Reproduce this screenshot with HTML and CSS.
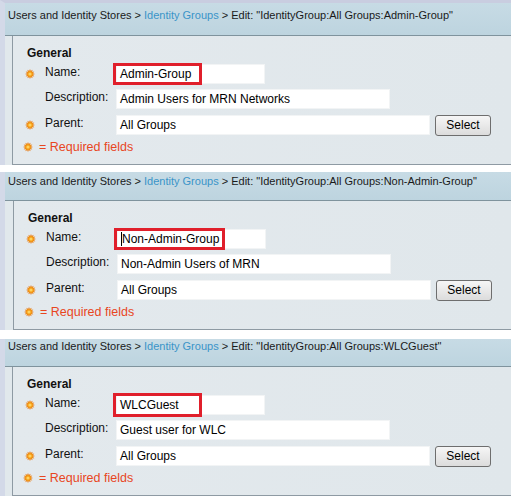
FILE: index.html
```html
<!DOCTYPE html>
<html>
<head>
<meta charset="utf-8">
<link rel="stylesheet" href="styles.css">
</head>
<body>
<svg class="defs" width="0" height="0">
  <defs>
    <g id="sun">
      <polygon points="5,0 5.8,2.1 7.5,0.7 7.1,2.9 9.3,2.5 7.9,4.2 10,5 7.9,5.8 9.3,7.5 7.1,7.1 7.5,9.3 5.8,7.9 5,10 4.2,7.9 2.5,9.3 2.9,7.1 0.7,7.5 2.1,5.8 0,5 2.1,4.2 0.7,2.5 2.9,2.9 2.5,0.7 4.2,2.1" fill="#e8780c"/>
      <circle cx="5" cy="5" r="3" fill="#f39a1a"/>
      <circle cx="5" cy="5" r="1.6" fill="#ffd35c"/>
    </g>
  </defs>
</svg>

<div class="panel p1">
  <div class="crumb">Users and Identity Stores &gt; <span class="link">Identity Groups</span> &gt; Edit: "IdentityGroup:All Groups:Admin-Group"</div>
  <div class="group">
    <div class="legend">General</div>
    <div class="row">
      <span class="req"><svg class="sun" viewBox="0 0 10 10"><use href="#sun"/></svg></span>
      <span class="label">Name:</span>
      <span class="field name">Admin-Group<span class="mark"></span></span>
    </div>
    <div class="row">
      <span class="req"></span>
      <span class="label">Description:</span>
      <span class="field desc">Admin Users for MRN Networks</span>
    </div>
    <div class="row parent">
      <span class="req"><svg class="sun" viewBox="0 0 10 10"><use href="#sun"/></svg></span>
      <span class="label">Parent:</span>
      <span class="field par">All Groups</span>
      <span class="btn">Select</span>
    </div>
    <div class="note"><svg class="sun" viewBox="0 0 10 10"><use href="#sun"/></svg><span>= Required fields</span></div>
  </div>
</div>

<div class="panel p2">
  <div class="crumb">Users and Identity Stores &gt; <span class="link">Identity Groups</span> &gt; Edit: "IdentityGroup:All Groups:Non-Admin-Group"</div>
  <div class="group">
    <div class="legend">General</div>
    <div class="row">
      <span class="req"><svg class="sun" viewBox="0 0 10 10"><use href="#sun"/></svg></span>
      <span class="label">Name:</span>
      <span class="field name"><span class="caret"></span>Non-Admin-Group<span class="mark wide"></span></span>
    </div>
    <div class="row">
      <span class="req"></span>
      <span class="label">Description:</span>
      <span class="field desc">Non-Admin Users of MRN</span>
    </div>
    <div class="row parent">
      <span class="req"><svg class="sun" viewBox="0 0 10 10"><use href="#sun"/></svg></span>
      <span class="label">Parent:</span>
      <span class="field par">All Groups</span>
      <span class="btn">Select</span>
    </div>
    <div class="note"><svg class="sun" viewBox="0 0 10 10"><use href="#sun"/></svg><span>= Required fields</span></div>
  </div>
</div>

<div class="panel p3">
  <div class="crumb">Users and Identity Stores &gt; <span class="link">Identity Groups</span> &gt; Edit: "IdentityGroup:All Groups:WLCGuest"</div>
  <div class="group">
    <div class="legend">General</div>
    <div class="row">
      <span class="req"><svg class="sun" viewBox="0 0 10 10"><use href="#sun"/></svg></span>
      <span class="label">Name:</span>
      <span class="field name">WLCGuest<span class="mark tall"></span></span>
    </div>
    <div class="row">
      <span class="req"></span>
      <span class="label">Description:</span>
      <span class="field desc">Guest user for WLC</span>
    </div>
    <div class="row parent">
      <span class="req"><svg class="sun" viewBox="0 0 10 10"><use href="#sun"/></svg></span>
      <span class="label">Parent:</span>
      <span class="field par">All Groups</span>
      <span class="btn">Select</span>
    </div>
    <div class="note"><svg class="sun" viewBox="0 0 10 10"><use href="#sun"/></svg><span>= Required fields</span></div>
  </div>
</div>
</body>
</html>
```

FILE: styles.css
```css
* { box-sizing: border-box; }
html, body {
  margin: 0;
  padding: 0;
  background: #ffffff;
  width: 511px;
  height: 499px;
  overflow: hidden;
  font-family: "Liberation Sans", Arial, sans-serif;
  color: #1a1a1a;
}
.defs { position: absolute; width: 0; height: 0; }

.panel {
  border-left: 5px solid #d3d9e8;
  background: #e1e8ec;
  padding-left: 7px;
}
.p1 { border-top: 3px solid #c9cde0; }
.p2 { margin-top: 7px; padding-left: 8px; }
.p3 { margin-top: 9px; }

.crumb {
  margin-left: -7px;
  padding-left: 3px;
  font-size: 11px;
  line-height: 14px;
  white-space: nowrap;
  background: linear-gradient(#c7dbe5, #bdd4df);
  border-bottom: 1px solid #7f939d;
}
.link { color: #3a94c8; }
.p1 .crumb { height: 33px; padding-top: 5px; }
.p2 .crumb { margin-left: -8px; height: 29px; padding-top: 2px; }
.p3 .crumb { height: 28px; padding-top: 0; }

.group {
  border-left: 1px solid #8e9aa3;
  border-bottom: 1px solid #8e9aa3;
  padding: 10px 0 10px 0;
  background: linear-gradient(90deg, #e3e9ed, #e0e7eb);
}
.legend {
  font-weight: bold;
  font-size: 12px;
  line-height: 14px;
  padding-left: 14px;
  color: #111;
}
.row {
  display: flex;
  align-items: flex-start;
  height: 20px;
  margin-top: 5px;
}
.legend + .row { margin-top: 4px; }
.row.parent { margin-top: 6px; }

.req {
  width: 32px;
  height: 20px;
  padding-left: 12px;
  display: flex;
  align-items: center;
  flex: none;
}
.sun { width: 10px; height: 10px; display: block; }
.label {
  width: 71px;
  flex: none;
  font-size: 12px;
  line-height: 16px;
  color: #111;
}
.field {
  position: relative;
  height: 20px;
  background: #ffffff;
  font-size: 12px;
  padding-left: 3px;
  color: #000;
  white-space: nowrap;
  flex: none;
  border: 1px solid #f2f4f5;
  line-height: 18px;
}
.field.name { width: 149px; }
.field.desc { width: 274px; }
.field.par { width: 314px; }

.caret {
  display: inline-block;
  width: 1px;
  height: 14px;
  background: #000;
  vertical-align: -3px;
}
.mark {
  position: absolute;
  left: -4px;
  top: -2px;
  width: 89px;
  height: 22px;
  border: 3px solid #e01f2b;
}
.mark.wide { width: 111px; }
.mark.tall { top: -3px; height: 24px; }

.btn {
  margin-left: 5px;
  width: 56px;
  height: 21px;
  border: 1px solid #6e6e6e;
  border-radius: 3px;
  background: linear-gradient(#f6f6f6, #dcdcdc);
  font-size: 12px;
  line-height: 19px;
  text-align: center;
  color: #000;
  flex: none;
}
.note {
  display: flex;
  align-items: center;
  margin-top: 5px;
  padding-left: 10px;
  height: 14px;
  font-size: 12.5px;
  line-height: 14px;
  color: #e8461e;
}
.note .sun { margin-right: 6px; }
```
